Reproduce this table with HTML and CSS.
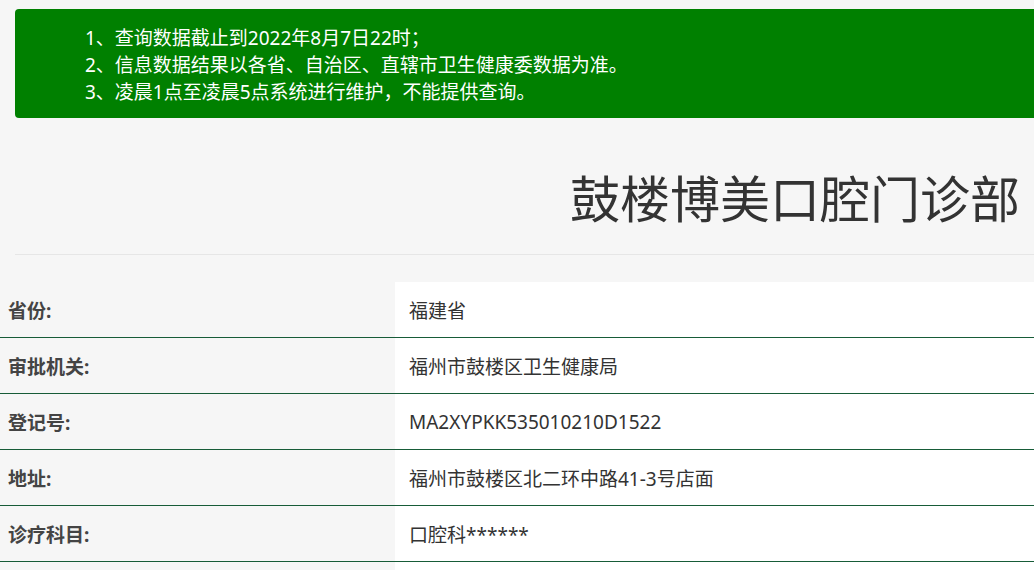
FILE: index.html
```html
<!DOCTYPE html>
<html lang="zh-CN">
<head>
    <meta charset="UTF-8">
    <title>鼓楼博美口腔门诊部</title>
    <link rel="stylesheet" href="styles.css">
</head>
<body>
<div class="notice">
    <p>1、查询数据截止到2022年8月7日22时；</p>
    <p>2、信息数据结果以各省、自治区、直辖市卫生健康委数据为准。</p>
    <p>3、凌晨1点至凌晨5点系统进行维护，不能提供查询。</p>
</div>
<div class="title-box">
    <h1>鼓楼博美口腔门诊部</h1>
</div>
<table class="info">
    <tr><th>省份:</th><td>福建省</td></tr>
    <tr><th>审批机关:</th><td>福州市鼓楼区卫生健康局</td></tr>
    <tr><th>登记号:</th><td>MA2XYPKK535010210D1522</td></tr>
    <tr><th>地址:</th><td>福州市鼓楼区北二环中路41-3号店面</td></tr>
    <tr><th>诊疗科目:</th><td>口腔科******</td></tr>
    <tr><th>&nbsp;</th><td>&nbsp;</td></tr>
</table>
</body>
</html>
```

FILE: styles.css
```css
html, body { overflow: hidden; }
body { margin: 0; background: #f6f6f6; font-family: "Noto Sans", "Noto Sans CJK SC", sans-serif; color: #333; }
.notice { margin: 9px -10px 0 15px; padding: 16px 0 12px 70px; background: #008000; color: #fff; border-radius: 4px; font-size: 19px; line-height: 27px; }
.notice p { margin: 0; }
.title-box { margin: 0 0 0 15px; padding: 51px 14px 25px 0; border-bottom: 1px solid #e6e6e6; text-align: right; }
.title-box h1 { margin: 0; font-size: 50px; line-height: 60px; font-weight: normal; color: #333; }
.info { width: 100%; margin-top: 27px; border-collapse: collapse; font-size: 19px; }
.info th, .info td { height: 55px; padding: 0; border-bottom: 1px solid #175c38; text-align: left; }
.info th { width: 395px; padding-left: 8px; box-sizing: border-box; background: #f6f6f6; color: #444; font-weight: bold; }
.info td { padding-left: 14px; background: #fff; color: #333; }
```
